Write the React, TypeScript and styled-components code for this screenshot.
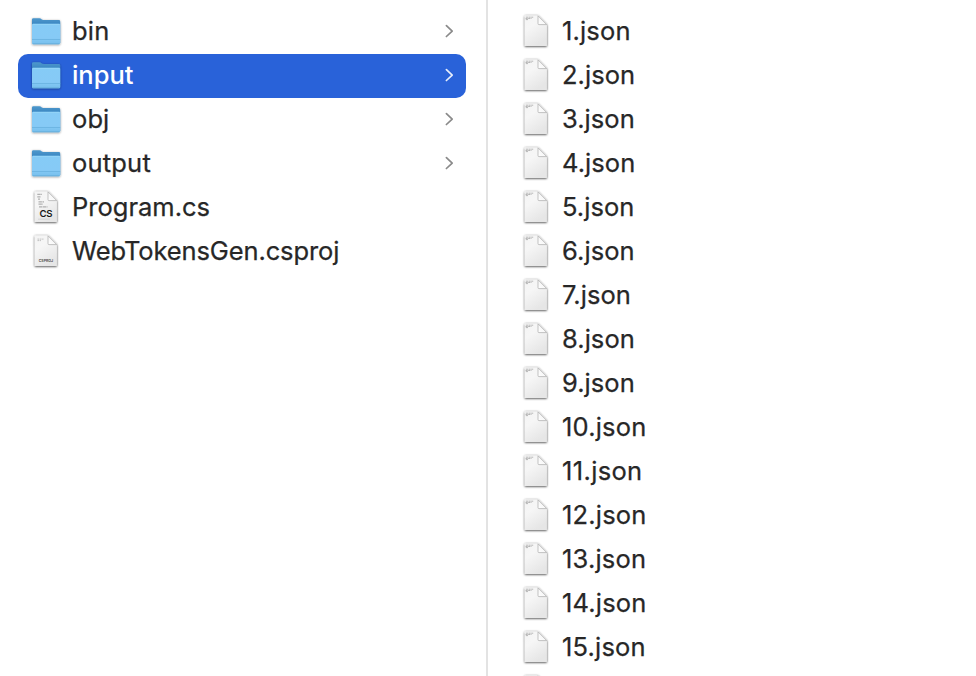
import React from "react";
import styled, { createGlobalStyle } from "styled-components";

const GlobalStyle = createGlobalStyle`
  * { box-sizing: border-box; }
  body { margin: 0; background: #fff; }
`;

const Browser = styled.main`
  display: grid;
  grid-template-columns: 488px 488px;
  width: 976px;
  height: 676px;
  overflow: hidden;
  background: #fff;
  font-family: Inter, "Liberation Sans", sans-serif;
  font-size: 25.5px;
  font-weight: 400;
  color: #272727;
`;

const Column = styled.ul<{ $divided?: boolean }>`
  list-style: none;
  margin: 0;
  height: 676px;
  overflow: hidden;
  padding: ${(p) => (p.$divided ? "10px 20px 0 18px" : "10px 18px 0 20px")};
  border-right: ${(p) => (p.$divided ? "2px solid #e3e3e3" : "none")};
`;

const Row = styled.li<{ $selected?: boolean }>`
  display: flex;
  align-items: flex-start;
  height: 44px;
  padding: 0 10px 0 12px;
  border-radius: 10px;
  background: ${(p) => (p.$selected ? "#2962d9" : "transparent")};
  color: ${(p) => (p.$selected ? "#fff" : "inherit")};
  font-weight: ${(p) => (p.$selected ? 500 : "inherit")};
`;

const Name = styled.span<{ $spacing: number; $selected?: boolean }>`
  flex: 1;
  margin-left: 10px;
  height: 42px;
  line-height: 42px;
  white-space: nowrap;
  letter-spacing: ${(p) => p.$spacing}px;
  -webkit-text-stroke: ${(p) => (p.$selected ? "0" : "0.25px currentColor")};
`;

const Icon = styled.svg`
  display: block;
  flex: none;
  width: 32px;
  height: 44px;
  overflow: visible;
`;

const Chevron = styled.svg<{ $selected?: boolean }>`
  display: block;
  width: 14px;
  height: 16px;
  margin-top: 13px;
  fill: none;
  stroke: ${(p) => (p.$selected ? "#e6edfb" : "#8a8a8a")};
  stroke-width: 1.7;
  stroke-linecap: round;
  stroke-linejoin: round;
`;

const Defs = styled.svg`
  display: block;
  width: 0;
  height: 0;
`;

function SharedDefs() {
  return (
    <Defs aria-hidden>
      <defs>
        <linearGradient id="folderBack" x1="0" y1="0" x2="0" y2="1">
          <stop offset="0" stopColor="#4d98cc" />
          <stop offset="0.25" stopColor="#3c87c2" />
          <stop offset="1" stopColor="#3583b8" />
        </linearGradient>
        <linearGradient id="folderFront" x1="0" y1="0" x2="0" y2="1">
          <stop offset="0" stopColor="#85cbf6" />
          <stop offset="0.7" stopColor="#86caf6" />
          <stop offset="1" stopColor="#76bfec" />
        </linearGradient>
        <linearGradient id="paper" x1="0" y1="0" x2="0.5" y2="1">
          <stop offset="0" stopColor="#f4f4f4" />
          <stop offset="0.4" stopColor="#f6f6f6" />
          <stop offset="1" stopColor="#e6e6e6" />
        </linearGradient>
        <linearGradient id="fold" x1="0" y1="1" x2="1" y2="0">
          <stop offset="0" stopColor="#ffffff" />
          <stop offset="0.5" stopColor="#f7f7f7" />
        </linearGradient>
        <filter id="shadow" x="-20%" y="-20%" width="140%" height="140%">
          <feDropShadow dx="0" dy="0.6" stdDeviation="0.9" floodColor="#000" floodOpacity="0.8" />
        </filter>
        <filter id="folderShadow" x="-20%" y="-20%" width="140%" height="140%">
          <feDropShadow dx="0" dy="0.7" stdDeviation="0.8" floodColor="#000" floodOpacity="0.45" />
        </filter>
      </defs>
    </Defs>
  );
}

function FolderIcon() {
  return (
    <Icon viewBox="0 0 32 44">
      <g filter="url(#folderShadow)">
        <path d="M2 33V9.6Q2 8.2 3.4 8.2H9.5C11.3 8.2 11.6 10.1 13.5 10.1H28.8Q30.2 10.1 30.2 11.5V33Z" fill="url(#folderBack)" />
        <path d="M2 14.7Q2 13.8 3.1 13.8H29.1Q30.2 13.8 30.2 14.7V32.9Q30.2 34.2 28.9 34.2H3.3Q2 34.2 2 32.9Z" fill="url(#folderFront)" />
      </g>
      <path d="M2.8 14.4H29.4" stroke="#9ad8f8" strokeWidth="0.7" />
      <path d="M2 29.5H30.2" stroke="#68b1df" strokeWidth="0.8" />
      <path d="M2.8 33.8H29.4" stroke="#62a9d6" strokeWidth="0.7" />
    </Icon>
  );
}

type DocKind = "cs" | "csproj" | "json";

function DocumentIcon({ kind }: { kind: DocKind }) {
  return (
    <Icon viewBox="0 0 32 44">
      <path d="M5.4 5.6H18L26.9 14.6V35.4Q26.9 36 26.3 36H5.3Q4.7 36 4.7 35.4V6.3Q4.7 5.6 5.4 5.6Z" fill="url(#paper)" filter="url(#shadow)" />
      <path d="M18 5.8V13.6Q18 14.6 19 14.6H26.7Z" fill="url(#fold)" stroke="#aaaaaa" strokeWidth="0.7" strokeLinejoin="round" />
      {kind === "json" && (
        <path d="M5.8 7.2H13.2M5.5 8.5H11.5M5.8 9.6H8" stroke="#b0b0b0" strokeWidth="0.9" strokeDasharray="2.2 0.5" />
      )}
      {kind === "csproj" && (
        <>
          <path d="M7.5 9.1H13.5M7.5 10.6H11" stroke="#b4b4b4" strokeWidth="0.8" strokeDasharray="1.7 0.6" />
          <text x="15.9" y="32.1" textAnchor="middle" fontSize="3.5" fontWeight="700" fill="#555" textLength="14.5">CSPROJ</text>
        </>
      )}
      {kind === "cs" && (
        <>
          <path d="M7.3 8.3H12M7.3 10.8H10.5M8 13.2H10M8.5 15.8H14M8.5 18.2H13M9 20.8H17.5" stroke="#b0b0b0" strokeWidth="1.2" strokeDasharray="3.4 0.5" />
          <path d="M8 33.2H20" stroke="#d0d0d0" strokeWidth="0.8" />
          <text x="16" y="30.8" textAnchor="middle" fontSize="9.6" fontWeight="600" fill="#181818" textLength="13">CS</text>
        </>
      )}
    </Icon>
  );
}

interface Entry {
  name: string;
  kind: "folder" | DocKind;
  spacing: number;
  selected?: boolean;
}

const projectEntries: Entry[] = [
  { name: "bin", kind: "folder", spacing: 0.2 },
  { name: "input", kind: "folder", spacing: -0.05, selected: true },
  { name: "obj", kind: "folder", spacing: 0.1 },
  { name: "output", kind: "folder", spacing: 0.2 },
  { name: "Program.cs", kind: "cs", spacing: 0 },
  { name: "WebTokensGen.csproj", kind: "csproj", spacing: -0.12 },
];

// "1" is a narrow digit, so names made only of ones are set slightly looser.
const spacingFor = (n: number) => (n === 11 ? 0.35 : n === 1 ? 0.15 : n < 10 ? 0.05 : 0.18);

const inputEntries: Entry[] = Array.from({ length: 15 }, (_, i) => ({
  name: `${i + 1}.json`,
  kind: "json",
  spacing: spacingFor(i + 1),
}));

function EntryRow({ entry }: { entry: Entry }) {
  return (
    <Row $selected={entry.selected}>
      {entry.kind === "folder" ? <FolderIcon /> : <DocumentIcon kind={entry.kind} />}
      <Name $spacing={entry.spacing} $selected={entry.selected}>{entry.name}</Name>
      {entry.kind === "folder" && (
        <Chevron viewBox="0 0 14 16" $selected={entry.selected}>
          <path d="M4.4 2.7L10.2 8.1L4.4 13.5" />
        </Chevron>
      )}
    </Row>
  );
}

export default function App() {
  return (
    <>
      <GlobalStyle />
      <SharedDefs />
      <Browser>
        <Column $divided>
          {projectEntries.map((e) => <EntryRow key={e.name} entry={e} />)}
        </Column>
        <Column>
          {inputEntries.map((e) => <EntryRow key={e.name} entry={e} />)}
          <Row>
            <DocumentIcon kind="json" />
          </Row>
        </Column>
      </Browser>
    </>
  );
}
